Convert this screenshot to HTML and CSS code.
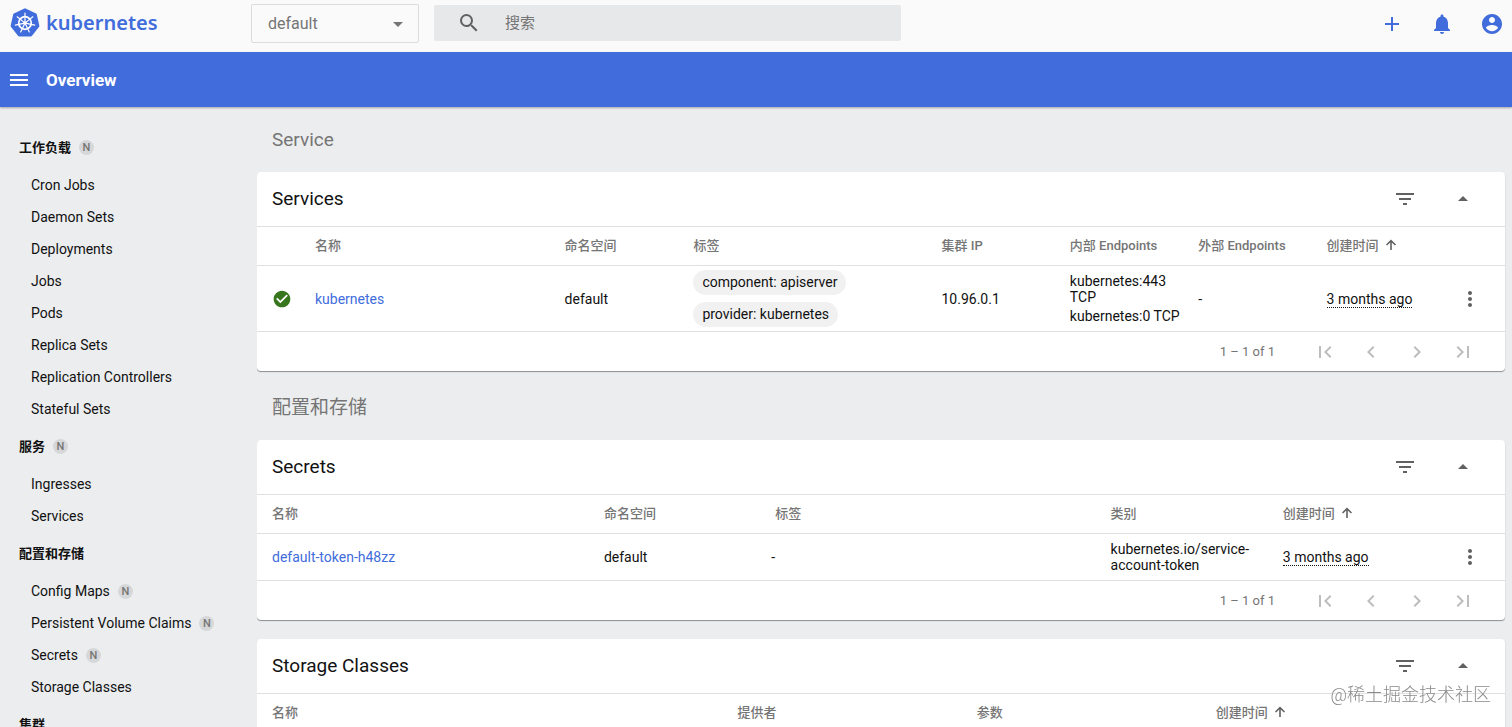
FILE: index.html
```html
<!DOCTYPE html>
<html lang="zh">
<head>
    <meta charset="UTF-8">
    <meta name="viewport" content="width=device-width, initial-scale=1.0">
    <title>Kubernetes Dashboard</title>
    <link rel="stylesheet" href="styles.css">
</head>
<body>
    <!-- shared icons -->
    <svg class="sprite" aria-hidden="true">
        <symbol id="i-filter" viewBox="0 0 24 24"><path d="M10 18h4v-2h-4v2zM3 6v2h18V6H3zm3 7h12v-2H6v2z"/></symbol>
        <symbol id="i-up" viewBox="0 0 24 24"><path d="M7 14l5-5 5 5z"/></symbol>
        <symbol id="i-down" viewBox="0 0 24 24"><path d="M7 10l5 5 5-5z"/></symbol>
        <symbol id="i-more" viewBox="0 0 24 24"><path d="M12 8c1.1 0 2-.9 2-2s-.9-2-2-2-2 .9-2 2 .9 2 2 2zm0 2c-1.1 0-2 .9-2 2s.9 2 2 2 2-.9 2-2-.9-2-2-2zm0 6c-1.1 0-2 .9-2 2s.9 2 2 2 2-.9 2-2-.9-2-2-2z"/></symbol>
        <symbol id="i-first" viewBox="0 0 24 24"><path d="M18.41 16.59L13.82 12l4.59-4.59L17 6l-6 6 6 6zM6 6h2v12H6z"/></symbol>
        <symbol id="i-prev" viewBox="0 0 24 24"><path d="M15.41 7.41L14 6l-6 6 6 6 1.41-1.41L10.83 12z"/></symbol>
        <symbol id="i-next" viewBox="0 0 24 24"><path d="M10 6L8.59 7.41 13.17 12l-4.58 4.59L10 18l6-6z"/></symbol>
        <symbol id="i-last" viewBox="0 0 24 24"><path d="M5.59 7.41L10.18 12l-4.59 4.59L7 18l6-6-6-6zM16 6h2v12h-2z"/></symbol>
        <symbol id="i-sort" viewBox="0 0 12 12"><path d="M5.2 11V3.4L2.1 6.5 1 5.4 6 .5l5 4.9-1.1 1.1-3.1-3.1V11z"/></symbol>
    </svg>

    <header class="topbar">
        <a class="logo" href="#">
            <svg class="logo-mark" viewBox="0 0 30 30">
                <path d="M15 1.6l10.5 5 2.6 11.4-7.3 9.2H9.2L1.9 18 4.5 6.600z" fill="#416cdc" stroke="#416cdc" stroke-width="2.600" stroke-linejoin="round"/>
                <g fill="none" stroke="#fff">
                    <circle cx="15" cy="15" r="6.300" stroke-width="1.700"/>
                    <path stroke-width="1.200" stroke-linecap="round" d="M15 13.500V5M16.200 14.100l6.600-5.300M16.500 15.300l8.200 1.900M15.700 16.400l3.600 7.600M14.300 16.400l-3.600 7.600M13.500 15.300l-8.200 1.900M13.800 14.100L7.200 8.800"/>
                </g>
                <circle cx="15" cy="15" r="1.800" fill="#fff"/>
            </svg>
            <span class="logo-text">kubernetes</span>
        </a>
        <div class="namespace">
            <select aria-label="Namespace">
                <option>default</option>
            </select>
            <svg class="icon"><use href="#i-down"/></svg>
        </div>
        <form class="search">
            <svg class="icon" viewBox="0 0 24 24"><path d="M15.500 14h-.79l-.28-.27A6.471 6.471 0 0 0 16 9.500 6.500 6.500 0 1 0 9.500 16c1.610 0 3.090-.59 4.230-1.570l.27.28v.79l5 4.990L20.490 19l-4.990-5zm-6 0C7.010 14 5 11.990 5 9.500S7.010 5 9.500 5 14 7.010 14 9.500 11.990 14 9.500 14z"/></svg>
            <input type="text" placeholder="搜索" aria-label="搜索">
        </form>
        <div class="actions">
            <button type="button" aria-label="Create"><svg class="icon" viewBox="0 0 24 24"><path d="M19 13h-6v6h-2v-6H5v-2h6V5h2v6h6v2z"/></svg></button>
            <button type="button" aria-label="Notifications"><svg class="icon" viewBox="0 0 24 24"><path d="M12 22c1.100 0 2-.9 2-2h-4c0 1.100.9 2 2 2zm6-6v-5c0-3.070-1.630-5.640-4.500-6.320V4c0-.83-.67-1.500-1.500-1.500s-1.500.67-1.500 1.500v.68C7.640 5.360 6 7.920 6 11v5l-2 2v1h16v-1l-2-2z"/></svg></button>
            <button type="button" aria-label="User"><svg class="icon" viewBox="0 0 24 24"><path d="M12 2C6.480 2 2 6.480 2 12s4.480 10 10 10 10-4.480 10-10S17.520 2 12 2zm0 3c1.660 0 3 1.340 3 3s-1.340 3-3 3-3-1.340-3-3 1.340-3 3-3zm0 14.200c-2.500 0-4.710-1.280-6-3.220.03-1.990 4-3.080 6-3.080 1.990 0 5.970 1.090 6 3.080-1.290 1.940-3.500 3.220-6 3.220z"/></svg></button>
        </div>
    </header>

    <div class="titlebar">
        <button type="button" aria-label="Menu"><svg class="icon" viewBox="0 0 24 24"><path d="M3 18h18v-2H3v2zm0-5h18v-2H3v2zm0-7v2h18V6H3z"/></svg></button>
        <h1>Overview</h1>
    </div>

    <div class="layout">
        <nav class="sidebar">
            <a class="group" href="#">工作负载 <span class="badge">N</span></a>
            <a href="#">Cron Jobs</a>
            <a href="#">Daemon Sets</a>
            <a href="#">Deployments</a>
            <a href="#">Jobs</a>
            <a href="#">Pods</a>
            <a href="#">Replica Sets</a>
            <a href="#">Replication Controllers</a>
            <a href="#">Stateful Sets</a>
            <a class="group" href="#">服务 <span class="badge">N</span></a>
            <a href="#">Ingresses</a>
            <a href="#">Services</a>
            <a class="group" href="#">配置和存储</a>
            <a href="#">Config Maps <span class="badge">N</span></a>
            <a href="#">Persistent Volume Claims <span class="badge">N</span></a>
            <a href="#">Secrets <span class="badge">N</span></a>
            <a href="#">Storage Classes</a>
            <a class="group" href="#">集群</a>
        </nav>

        <main class="content">
            <h2 class="section-title">Service</h2>

            <section class="card">
                <div class="card-header">
                    <h3>Services</h3>
                    <button type="button" aria-label="Filter"><svg class="icon"><use href="#i-filter"/></svg></button>
                    <button type="button" aria-label="Collapse"><svg class="icon"><use href="#i-up"/></svg></button>
                </div>
                <table class="services">
                    <colgroup>
                        <col class="col-status">
                        <col class="col-name">
                        <col class="col-ns">
                        <col class="col-labels">
                        <col>
                        <col>
                        <col>
                        <col>
                        <col class="col-menu">
                    </colgroup>
                    <thead>
                        <tr>
                            <th></th>
                            <th>名称</th>
                            <th>命名空间</th>
                            <th class="labels">标签</th>
                            <th>集群 IP</th>
                            <th>内部 Endpoints</th>
                            <th>外部 Endpoints</th>
                            <th>创建时间 <svg class="sort"><use href="#i-sort"/></svg></th>
                            <th></th>
                        </tr>
                    </thead>
                    <tbody>
                        <tr>
                            <td><svg class="icon status" viewBox="0 0 24 24"><path d="M12 2C6.480 2 2 6.480 2 12s4.480 10 10 10 10-4.480 10-10S17.520 2 12 2zm-2 15l-5-5 1.410-1.410L10 14.170l7.590-7.590L19 8l-9 9z"/></svg></td>
                            <td><a href="#">kubernetes</a></td>
                            <td>default</td>
                            <td>
                                <div class="chips">
                                    <span class="chip">component: apiserver</span>
                                    <span class="chip">provider: kubernetes</span>
                                </div>
                            </td>
                            <td>10.96.0.1</td>
                            <td>
                                <div class="endpoint">kubernetes:443 TCP</div>
                                <div class="endpoint">kubernetes:0 TCP</div>
                            </td>
                            <td>-</td>
                            <td><span class="date">3 months ago</span></td>
                            <td><button type="button" aria-label="More"><svg class="icon"><use href="#i-more"/></svg></button></td>
                        </tr>
                    </tbody>
                </table>
                <div class="pager">
                    <span>1 – 1 of 1</span>
                    <button type="button" aria-label="First page" disabled><svg class="icon"><use href="#i-first"/></svg></button>
                    <button type="button" aria-label="Previous page" disabled><svg class="icon"><use href="#i-prev"/></svg></button>
                    <button type="button" aria-label="Next page" disabled><svg class="icon"><use href="#i-next"/></svg></button>
                    <button type="button" aria-label="Last page" disabled><svg class="icon"><use href="#i-last"/></svg></button>
                </div>
            </section>

            <h2 class="section-title">配置和存储</h2>

            <section class="card">
                <div class="card-header">
                    <h3>Secrets</h3>
                    <button type="button" aria-label="Filter"><svg class="icon"><use href="#i-filter"/></svg></button>
                    <button type="button" aria-label="Collapse"><svg class="icon"><use href="#i-up"/></svg></button>
                </div>
                <table class="secrets">
                    <colgroup>
                        <col class="col-name">
                        <col class="col-ns">
                        <col class="col-labels">
                        <col>
                        <col>
                        <col class="col-menu">
                    </colgroup>
                    <thead>
                        <tr>
                            <th>名称</th>
                            <th>命名空间</th>
                            <th class="labels">标签</th>
                            <th>类别</th>
                            <th>创建时间 <svg class="sort"><use href="#i-sort"/></svg></th>
                            <th></th>
                        </tr>
                    </thead>
                    <tbody>
                        <tr>
                            <td><a href="#">default-token-h48zz</a></td>
                            <td>default</td>
                            <td>-</td>
                            <td>kubernetes.io/service-account-token</td>
                            <td><span class="date">3 months ago</span></td>
                            <td><button type="button" aria-label="More"><svg class="icon"><use href="#i-more"/></svg></button></td>
                        </tr>
                    </tbody>
                </table>
                <div class="pager">
                    <span>1 – 1 of 1</span>
                    <button type="button" aria-label="First page" disabled><svg class="icon"><use href="#i-first"/></svg></button>
                    <button type="button" aria-label="Previous page" disabled><svg class="icon"><use href="#i-prev"/></svg></button>
                    <button type="button" aria-label="Next page" disabled><svg class="icon"><use href="#i-next"/></svg></button>
                    <button type="button" aria-label="Last page" disabled><svg class="icon"><use href="#i-last"/></svg></button>
                </div>
            </section>

            <section class="card">
                <div class="card-header">
                    <h3>Storage Classes</h3>
                    <button type="button" aria-label="Filter"><svg class="icon"><use href="#i-filter"/></svg></button>
                    <button type="button" aria-label="Collapse"><svg class="icon"><use href="#i-up"/></svg></button>
                </div>
                <table class="storage">
                    <colgroup>
                        <col class="col-name">
                        <col>
                        <col>
                        <col>
                        <col class="col-menu">
                    </colgroup>
                    <thead>
                        <tr>
                            <th>名称</th>
                            <th>提供者</th>
                            <th>参数</th>
                            <th>创建时间 <svg class="sort"><use href="#i-sort"/></svg></th>
                            <th></th>
                        </tr>
                    </thead>
                </table>
            </section>
        </main>
    </div>

    <div class="watermark">@稀土掘金技术社区</div>
</body>
</html>
```

FILE: styles.css
```css
:root {
    --primary: #416cdc;
    --background: #ecedef;
    --muted: #757575;
    --border: #e0e0e0;
}

* {
    box-sizing: border-box;
}

body {
    margin: 0;
    height: 100vh;
    overflow: hidden;
    display: flex;
    flex-direction: column;
    font-family: Roboto, "Noto Sans CJK SC", sans-serif;
    font-size: 14px;
    font-weight: 400;
    line-height: 16px;
    color: #111;
    background: var(--background);
}

a {
    color: var(--primary);
    text-decoration: none;
}

button {
    display: flex;
    padding: 0;
    border: none;
    background: none;
    color: inherit;
    cursor: pointer;
}

h1, h2, h3 {
    margin: 0;
}

.sprite {
    display: none;
}

.icon {
    display: block;
    width: 24px;
    height: 24px;
    flex: none;
    fill: currentColor;
}

/* top bar */
.topbar {
    display: flex;
    align-items: flex-start;
    flex: none;
    height: 52px;
    padding: 4px 8px 0 10px;
    background: #fafafa;
}

.logo {
    display: flex;
    align-items: center;
    gap: 6px;
    width: 241px;
    height: 38px;
}

.logo-mark {
    width: 30px;
    height: 30px;
}

.logo-text {
    font-family: "Noto Sans", sans-serif;
    font-size: 20px;
    font-weight: 600;
}

.namespace {
    position: relative;
    width: 168px;
    margin-right: 15px;
    color: var(--muted);
}

.namespace select {
    appearance: none;
    width: 100%;
    height: 39px;
    padding: 0 16px;
    border: 1px solid #dcdcdc;
    border-radius: 2px;
    background: transparent;
    font-family: inherit;
    font-size: 16px;
    color: inherit;
}

.namespace .icon {
    position: absolute;
    top: 8px;
    right: 9px;
    pointer-events: none;
}

.search {
    display: flex;
    align-items: center;
    gap: 24px;
    width: 467px;
    height: 36px;
    margin-top: 1px;
    padding: 0 23px;
    border-radius: 2px;
    background: #e7e8e9;
    color: #616161;
}

.search input {
    flex: 1;
    min-width: 0;
    padding: 0;
    border: none;
    outline: none;
    background: none;
    font-family: inherit;
    font-size: 15px;
}

.search input::placeholder {
    color: var(--muted);
}

.actions {
    display: flex;
    gap: 26px;
    margin-left: auto;
    padding-top: 8px;
    color: var(--primary);
}

/* blue title bar */
.titlebar {
    display: flex;
    align-items: center;
    gap: 15px;
    flex: none;
    height: 55px;
    padding: 0 7px;
    background: var(--primary);
    box-shadow: 0 1px 2px rgba(0, 0, 0, 0.3);
    color: white;
}

.titlebar h1 {
    font-size: 17px;
    font-weight: 700;
}

.layout {
    display: flex;
    flex: 1;
    min-height: 0;
}

/* sidebar */
.sidebar {
    flex: none;
    width: 257px;
    padding-top: 19px;
    overflow: hidden;
}

.sidebar a {
    display: flex;
    align-items: center;
    gap: 8px;
    height: 32px;
    padding-left: 31px;
    color: #111;
}

.sidebar .group {
    height: 43px;
    padding-left: 19px;
    font-size: 13px;
    font-weight: 700;
}

.badge {
    width: 15px;
    height: 15px;
    border-radius: 50%;
    background: #d6d7d8;
    font-size: 11px;
    font-weight: 500;
    line-height: 15px;
    text-align: center;
    color: var(--muted);
}

/* content */
.content {
    flex: 1;
    min-width: 0;
    padding: 15px 7px 0 0;
    overflow: hidden;
}

.section-title {
    padding: 6px 15px 20px;
    font-size: 19px;
    font-weight: 400;
    line-height: 24px;
    color: var(--muted);
}

.card {
    margin-bottom: 19px;
    border-radius: 4px;
    background: white;
    box-shadow: 0 1px 1px rgba(0, 0, 0, 0.4);
}

.card-header {
    display: flex;
    align-items: center;
    gap: 34px;
    height: 54px;
    padding: 0 30px 0 15px;
    color: #616161;
}

.card-header h3 {
    flex: 1;
    font-size: 19px;
    font-weight: 400;
    color: #111;
}

table {
    width: 100%;
    table-layout: fixed;
    border-spacing: 0;
}

th, td {
    padding: 0;
    border-top: 1px solid var(--border);
    text-align: left;
}

th {
    height: 39px;
    font-size: 13px;
    font-weight: 500;
    color: var(--muted);
}

td {
    height: 47px;
}

th:first-child, td:first-child {
    padding-left: 15px;
}

td button {
    margin-left: 3px;
    color: #616161;
}

th.labels {
    padding-left: 4px;
}

.col-menu {
    width: 50px;
}

.services .col-status {
    width: 58px;
}

.services .col-name {
    width: 20%;
}

.services .col-ns {
    width: 10%;
}

.services .col-labels {
    width: 20.2%;
}

.secrets .col-name {
    width: 27.8%;
}

.secrets .col-ns {
    width: 13.4%;
}

.secrets .col-labels {
    width: 27.2%;
}

.storage .col-name {
    width: 38.5%;
}

.sort {
    width: 12px;
    height: 12px;
    margin-left: 3px;
    vertical-align: -1px;
    fill: #616161;
}

.status {
    width: 20px;
    height: 20px;
    color: #38761d;
}

.chips {
    display: flex;
    flex-direction: column;
    align-items: flex-start;
    gap: 7px;
    padding: 4px;
}

.chip {
    padding: 4px 9px 5px;
    border-radius: 13px;
    background: #f1f1f1;
}

.endpoint {
    padding-right: 16px;
}

.endpoint + .endpoint {
    margin-top: 3px;
}

.date {
    border-bottom: 1px dotted #111;
    line-height: 14px;
}

.pager {
    display: flex;
    align-items: center;
    justify-content: flex-end;
    gap: 22px;
    height: 40px;
    padding-right: 30px;
    border-top: 1px solid var(--border);
    color: #bdbdbd;
}

.pager span {
    margin-right: 16px;
    font-size: 13px;
    color: var(--muted);
}

.watermark {
    position: fixed;
    right: 21px;
    bottom: 20px;
    font-size: 18px;
    font-weight: 300;
    line-height: 24px;
    color: #8a8a8a;
    text-shadow: 0 0 2px white;
}
```
